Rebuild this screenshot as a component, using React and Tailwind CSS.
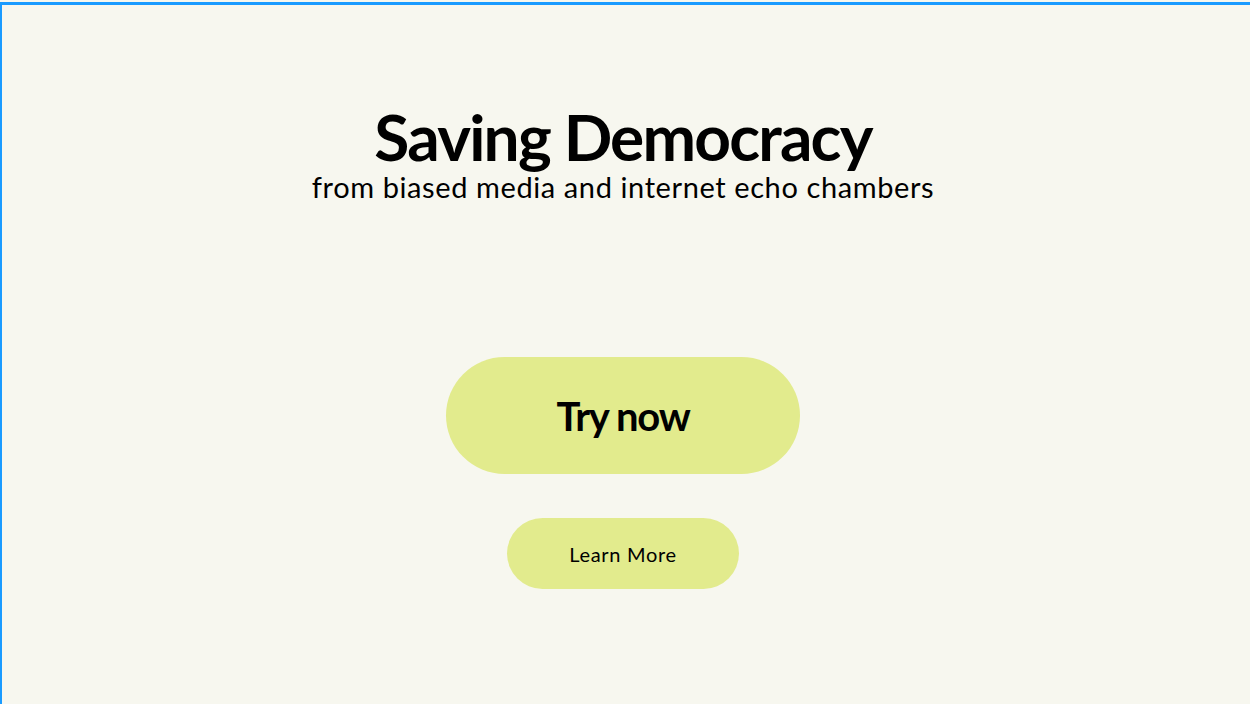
import React from 'react';

const App = () => {
  return (
    <div className="min-h-[704px] w-full bg-[#f7f7ef] pt-[2px]">
      <div
        className="min-h-[702px] border-t-[3px] border-l-2 border-[#1a9bff] pr-[6px] flex flex-col items-center text-black"
        style={{ fontFamily: 'Lato, "Open Sans", sans-serif' }}
      >
        <h1 className="mt-[99px] text-[64px] leading-[66px] font-bold tracking-[-1.8px]">
          Saving Democracy
        </h1>
        <p className="text-[29px] leading-[34px] tracking-[0.6px]">
          from biased media and internet echo chambers
        </p>

        <button
          type="button"
          className="mt-[153px] w-[354px] h-[117px] rounded-full bg-[#e2eb8d] text-[40px] font-bold tracking-[-1.3px]"
        >
          Try now
        </button>

        <button
          type="button"
          className="mt-[44px] w-[232px] h-[71px] rounded-full bg-[#e2eb8d] text-[20px] tracking-[0.7px]"
        >
          Learn More
        </button>
      </div>
    </div>
  );
};

export default App;
